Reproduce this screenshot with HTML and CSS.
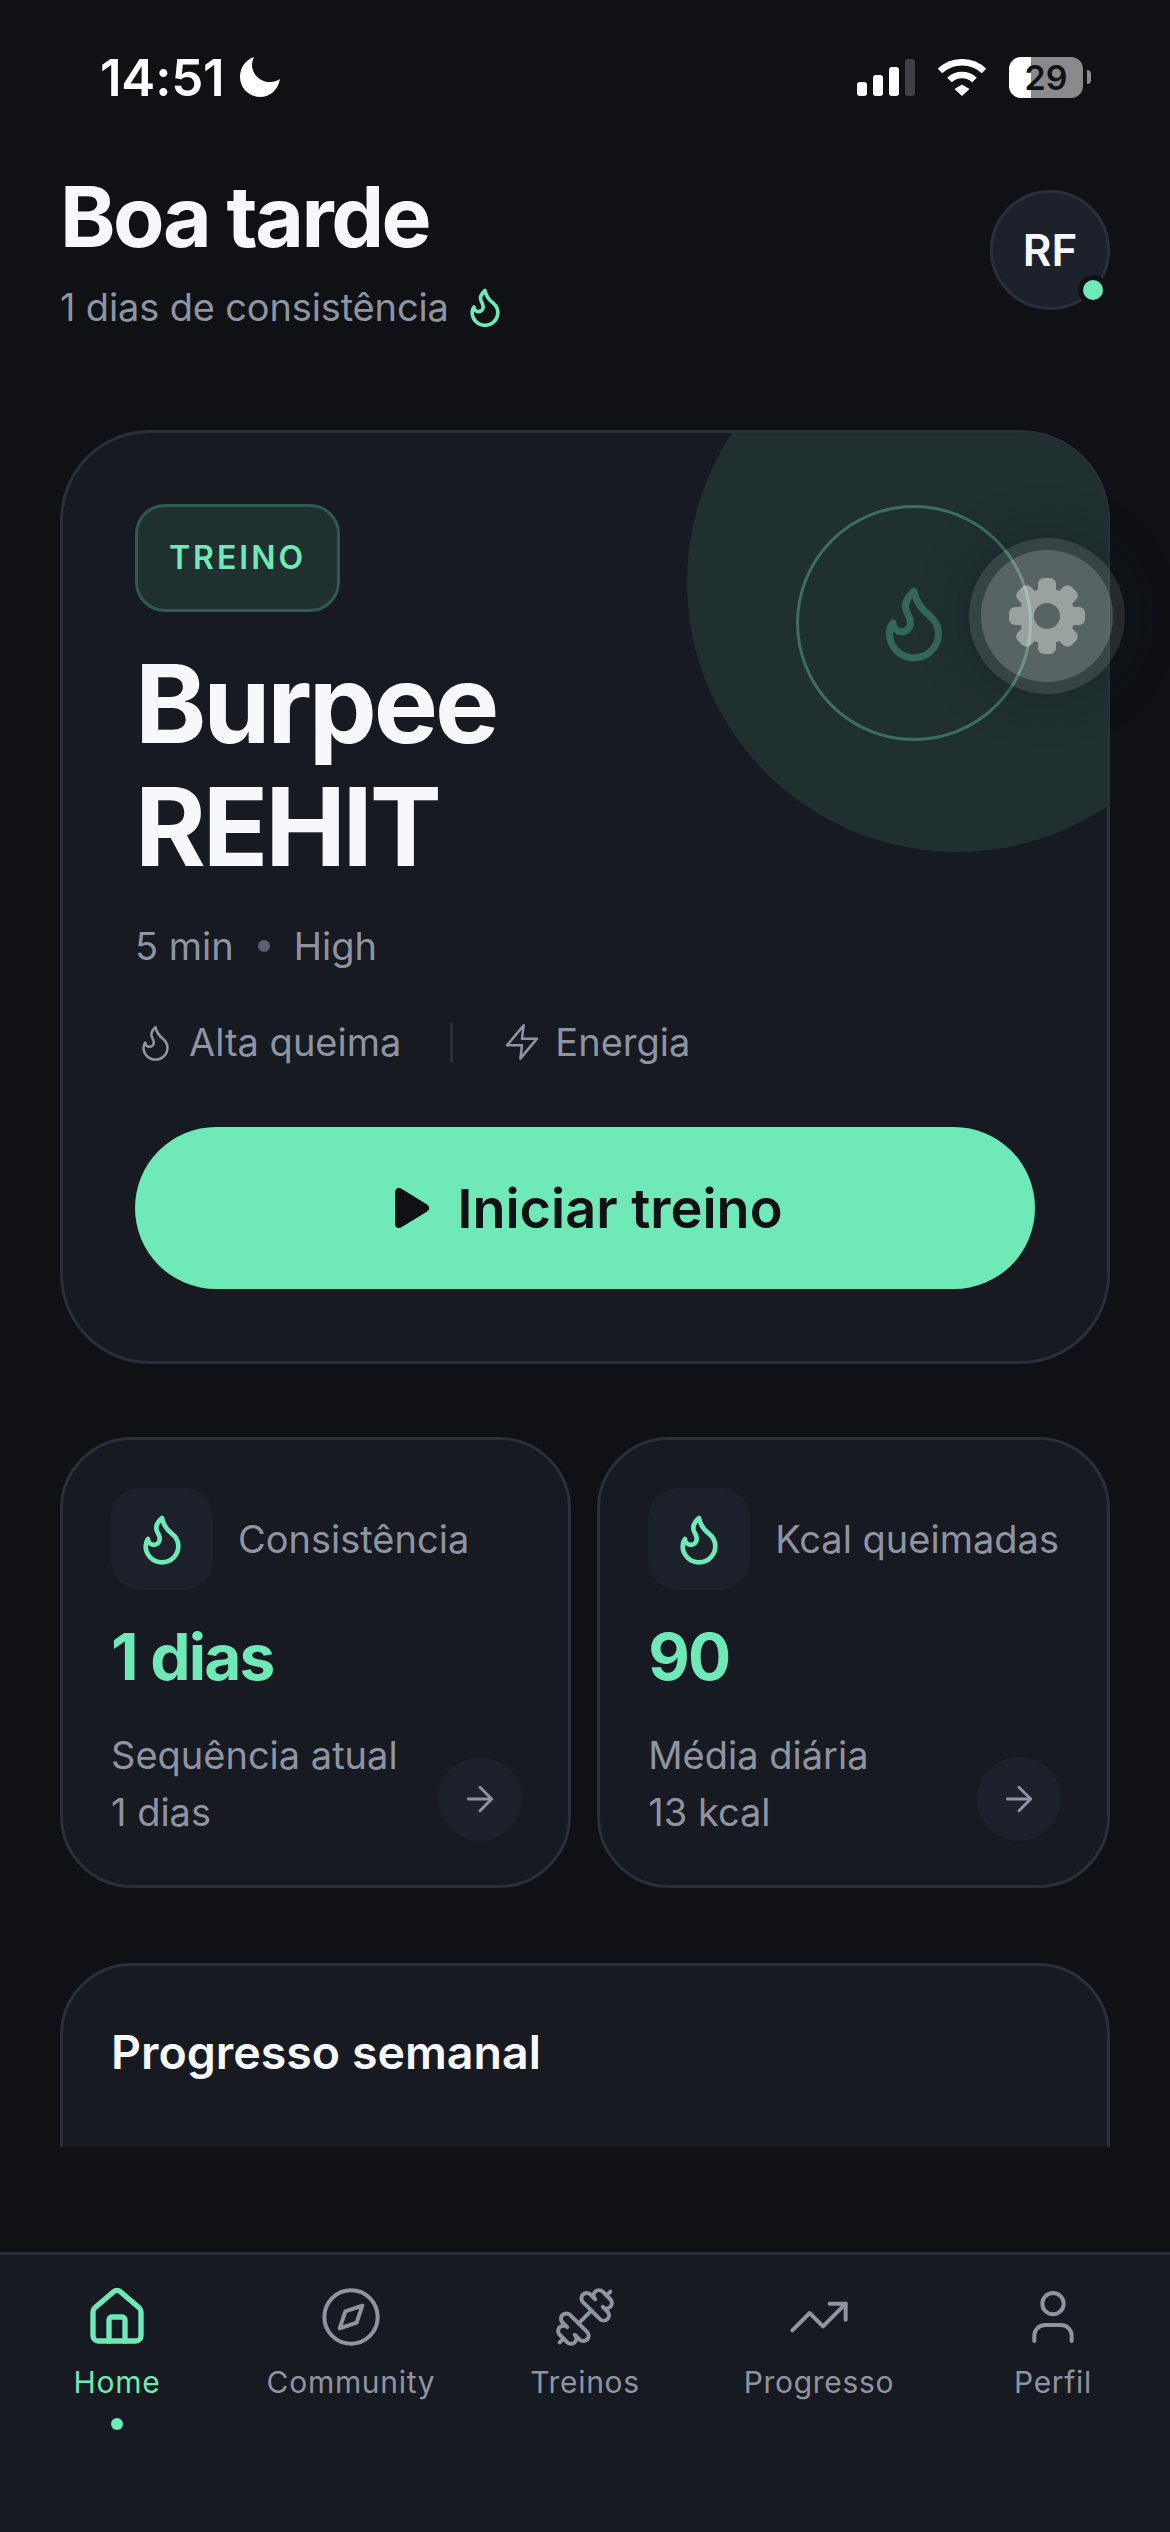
FILE: index.html
```html
<!DOCTYPE html>
<html lang="pt-BR">
<head>
    <meta charset="utf-8">
    <title>Boa tarde</title>
    <link rel="stylesheet" href="styles.css">
</head>
<body>
    <svg class="icon-defs" width="0" height="0">
        <defs>
            <symbol id="flame" viewBox="0 0 24 24">
                <path d="M8.5 14.5A2.5 2.5 0 0 0 11 12c0-1.38-.5-2-1-3-1.072-2.143-.224-4.054 2-6 .5 2.5 2 4.9 4 6.5 2 1.6 3 3.5 3 5.5a7 7 0 1 1-14 0c0-1.153.433-2.294 1-3a2.5 2.5 0 0 0 2.5 2.5z"/>
            </symbol>
            <symbol id="arrow" viewBox="0 0 24 24">
                <path d="M5 12h14"/>
                <path d="m12 5 7 7-7 7"/>
            </symbol>
        </defs>
    </svg>

    <div class="app">
        <div class="scroll-area">
            <div class="status-bar">
                <div class="status-left">
                    <span class="status-time">14:51</span>
                    <svg class="status-moon" width="40" height="40" viewBox="0 0 40 40">
                        <path d="M14 0C5 3 0 11 0 20c0 11 9 20 20 20 10 0 18-7 20-18-3 2-6 3-10 3-10 0-18-8-18-17 0-3 1-6 2-8z"/>
                    </svg>
                </div>
                <div class="status-right">
                    <div class="signal">
                        <span class="signal-bar bar-1"></span>
                        <span class="signal-bar bar-2"></span>
                        <span class="signal-bar bar-3"></span>
                        <span class="signal-bar bar-4"></span>
                    </div>
                    <svg class="wifi" width="50" height="37" viewBox="0 0 50 37">
                        <path class="wifi-arc" d="M3 12A32 32 0 0 1 47 12"/>
                        <path class="wifi-arc" d="M12.5 21A18 18 0 0 1 37.5 21"/>
                        <polygon class="wifi-dot" points="17.5,30 25,25.5 32.5,30 25,37"/>
                    </svg>
                    <div class="battery">
                        <div class="battery-body">29</div>
                        <span class="battery-nub"></span>
                    </div>
                </div>
            </div>

            <header class="header">
                <div>
                    <h1 class="greeting">Boa tarde</h1>
                    <div class="streak">
                        <span>1 dias de consistência</span>
                        <svg class="icon icon-green streak-flame"><use href="#flame"/></svg>
                    </div>
                </div>
                <div class="avatar">
                    RF
                    <span class="avatar-dot"></span>
                </div>
            </header>

            <section class="hero-card">
                <div class="hero-glow"></div>
                <div class="hero-ring">
                    <svg class="icon hero-flame"><use href="#flame"/></svg>
                </div>

                <span class="badge">TREINO</span>
                <h2 class="hero-title">Burpee<br>REHIT</h2>
                <div class="hero-meta">
                    <span>5 min</span>
                    <span class="meta-dot"></span>
                    <span>High</span>
                </div>
                <div class="hero-tags">
                    <div class="tag">
                        <svg class="icon tag-flame"><use href="#flame"/></svg>
                        <span>Alta queima</span>
                    </div>
                    <span class="tag-divider"></span>
                    <div class="tag">
                        <svg class="icon tag-zap" viewBox="0 0 24 24"><polygon points="13 2 3 14 12 14 11 22 21 10 12 10 13 2"/></svg>
                        <span>Energia</span>
                    </div>
                </div>
                <button class="start-button">
                    <svg class="play" width="40" height="42" viewBox="0 0 40 42"><polygon points="6,5 6,37 32,21"/></svg>
                    Iniciar treino
                </button>
            </section>

            <div class="stats">
                <section class="stat-card">
                    <div class="stat-head">
                        <div class="stat-icon"><svg class="icon icon-green stat-flame"><use href="#flame"/></svg></div>
                        <span>Consistência</span>
                    </div>
                    <div class="stat-value">1 dias</div>
                    <div class="stat-foot">
                        <div>Sequência atual<br>1 dias</div>
                        <div class="stat-arrow"><svg class="icon arrow-icon"><use href="#arrow"/></svg></div>
                    </div>
                </section>
                <section class="stat-card">
                    <div class="stat-head">
                        <div class="stat-icon"><svg class="icon icon-green stat-flame"><use href="#flame"/></svg></div>
                        <span>Kcal queimadas</span>
                    </div>
                    <div class="stat-value">90</div>
                    <div class="stat-foot">
                        <div>Média diária<br>13 kcal</div>
                        <div class="stat-arrow"><svg class="icon arrow-icon"><use href="#arrow"/></svg></div>
                    </div>
                </section>
            </div>

            <section class="progress-card">
                <h3 class="progress-title">Progresso semanal</h3>
            </section>
        </div>

        <nav class="tab-bar">
            <div class="tab tab-active">
                <svg class="icon tab-icon" viewBox="0 0 24 24">
                    <path d="M3 10a2 2 0 0 1 .7-1.5l7-6a2 2 0 0 1 2.6 0l7 6A2 2 0 0 1 21 10v9a2 2 0 0 1-2 2H5a2 2 0 0 1-2-2z"/>
                    <path d="M15 21v-8a1 1 0 0 0-1-1h-4a1 1 0 0 0-1 1v8"/>
                </svg>
                <span>Home</span>
                <span class="tab-dot"></span>
            </div>
            <div class="tab">
                <svg class="icon tab-icon" viewBox="0 0 24 24">
                    <circle cx="12" cy="12" r="10"/>
                    <polygon points="16.24 7.76 14.12 14.12 7.76 16.24 9.88 9.88 16.24 7.76"/>
                </svg>
                <span>Community</span>
            </div>
            <div class="tab">
                <svg class="icon tab-icon dumbbell" viewBox="0 0 24 24">
                    <path d="M14.4 14.4 9.6 9.6"/>
                    <path d="M18.657 21.485a2 2 0 1 1-2.829-2.828l-1.767 1.768a2 2 0 1 1-2.829-2.829l6.364-6.364a2 2 0 1 1 2.829 2.829l-1.768 1.767a2 2 0 1 1 2.828 2.829z"/>
                    <path d="m21.5 21.5-1.4-1.4"/>
                    <path d="M3.9 3.9 2.5 2.5"/>
                    <path d="M6.404 12.768a2 2 0 1 1-2.829-2.829l1.768-1.767a2 2 0 1 1-2.828-2.829l2.828-2.828a2 2 0 1 1 2.829 2.828l1.767-1.768a2 2 0 1 1 2.829 2.829z"/>
                </svg>
                <span>Treinos</span>
            </div>
            <div class="tab">
                <svg class="icon tab-icon" viewBox="0 0 24 24">
                    <polyline points="22 7 13.5 15.5 8.5 10.5 2 17"/>
                    <polyline points="16 7 22 7 22 13"/>
                </svg>
                <span>Progresso</span>
            </div>
            <div class="tab">
                <svg class="icon tab-icon" viewBox="0 0 24 24">
                    <path d="M19 21v-2a4 4 0 0 0-4-4H9a4 4 0 0 0-4 4v2"/>
                    <circle cx="12" cy="7" r="4"/>
                </svg>
                <span>Perfil</span>
            </div>
        </nav>

        <!-- floating assistive touch button -->
        <div class="touch-button">
            <div class="touch-inner">
                <svg class="gear" width="80" height="80" viewBox="0 0 80 80">
                    <mask id="gearHole">
                        <rect width="80" height="80" fill="#fff"/>
                        <circle cx="40" cy="40" r="13" fill="#000"/>
                    </mask>
                    <g mask="url(#gearHole)">
                        <circle cx="40" cy="40" r="28"/>
                        <rect x="31" y="2" width="18" height="76" rx="6"/>
                        <rect x="31" y="2" width="18" height="76" rx="6" transform="rotate(45 40 40)"/>
                        <rect x="31" y="2" width="18" height="76" rx="6" transform="rotate(90 40 40)"/>
                        <rect x="31" y="2" width="18" height="76" rx="6" transform="rotate(135 40 40)"/>
                    </g>
                </svg>
            </div>
        </div>
    </div>
</body>
</html>
```

FILE: styles.css
```css
* {
    margin: 0;
    padding: 0;
    box-sizing: border-box;
}

body {
    background-color: #0f1115;
    color: #f7f8fc;
    font-family: 'Inter', 'Liberation Sans', sans-serif;
}

.icon-defs {
    position: absolute;
}

.icon {
    fill: none;
    stroke: currentColor;
    stroke-width: 2;
    stroke-linecap: round;
    stroke-linejoin: round;
}

.icon-green {
    color: #6ee9b7;
}

.app {
    position: relative;
    width: 1170px;
    height: 2532px;
    display: flex;
    flex-direction: column;
    overflow: hidden;
}

.scroll-area {
    height: 2147px;
    padding: 0 60px;
    overflow: hidden;
}

/* Status bar */
.status-bar {
    height: 169px;
    margin: 0 -60px;
    padding: 50px 79px 0 100px;
    display: flex;
    justify-content: space-between;
    align-items: flex-start;
}

.status-left {
    display: flex;
    align-items: center;
    gap: 16px;
    height: 54px;
}

.status-time {
    font-size: 51px;
    font-weight: 600;
    letter-spacing: -0.2px;
    color: #fff;
}

.status-moon {
    fill: #fff;
}

.status-right {
    display: flex;
    align-items: center;
    height: 54px;
}

.signal {
    display: flex;
    align-items: flex-end;
    gap: 6px;
    height: 37px;
}

.signal-bar {
    width: 10px;
    border-radius: 3px;
    background-color: #fff;
}

.bar-1 { height: 14px; }
.bar-2 { height: 21px; }
.bar-3 { height: 29px; }
.bar-4 { height: 37px; background-color: #3f4044; }

.wifi {
    margin: 0 22px;
}

.wifi-arc {
    fill: none;
    stroke: #fff;
    stroke-width: 6.5;
}

.wifi-dot {
    fill: #fff;
}

.battery {
    display: flex;
    align-items: center;
    gap: 4px;
}

.battery-body {
    width: 74px;
    height: 41px;
    border-radius: 12px;
    background: linear-gradient(to right, #fff 30%, #8a8a8c 30%);
    color: #111215;
    font-size: 34px;
    font-weight: 600;
    line-height: 41px;
    text-align: center;
}

.battery-nub {
    width: 4px;
    height: 14px;
    border-radius: 0 4px 4px 0;
    background-color: #8a8a8c;
}

/* Header */
.header {
    display: flex;
    justify-content: space-between;
    align-items: center;
}

.greeting {
    font-size: 84px;
    font-weight: 700;
    line-height: 96px;
    letter-spacing: -2.5px;
}

.streak {
    display: flex;
    align-items: center;
    gap: 14px;
    margin-top: 19px;
    font-size: 38px;
    line-height: 46px;
    letter-spacing: -0.15px;
    color: #8f94a3;
}

.streak-flame {
    width: 44px;
    height: 44px;
}

.avatar {
    position: relative;
    width: 120px;
    height: 120px;
    display: flex;
    justify-content: center;
    align-items: center;
    border: 3px solid #2a2f3c;
    border-radius: 50%;
    background-color: #1d212b;
    font-size: 44px;
    font-weight: 600;
}

.avatar-dot {
    position: absolute;
    right: -1px;
    bottom: 2px;
    width: 30px;
    height: 30px;
    border: 5px solid #0f1115;
    border-radius: 50%;
    background-color: #6ee9b7;
}

/* Main workout card */
.hero-card {
    position: relative;
    margin-top: 100px;
    height: 934px;
    padding: 71px 72px 0;
    border: 3px solid #2a2f3c;
    border-radius: 90px;
    background-color: #171a21;
    overflow: hidden;
}

.hero-glow {
    position: absolute;
    left: 624px;
    top: -121px;
    width: 540px;
    height: 540px;
    border-radius: 50%;
    background-color: #20302f;
}

.hero-ring {
    position: absolute;
    left: 733px;
    top: 72px;
    width: 236px;
    height: 236px;
    display: flex;
    justify-content: center;
    align-items: center;
    border: 3px solid #3d6f60;
    border-radius: 50%;
}

.hero-flame {
    width: 84px;
    height: 84px;
    color: #35665a;
}

.badge {
    display: block;
    width: 205px;
    height: 108px;
    border: 3px solid #2f5a4d;
    border-radius: 30px;
    background-color: #20302f;
    color: #6ee9b7;
    font-size: 32px;
    font-weight: 600;
    line-height: 102px;
    letter-spacing: 3px;
    text-align: center;
}

.hero-title {
    margin-top: 30px;
    font-size: 108px;
    font-weight: 700;
    line-height: 123px;
    letter-spacing: -3.2px;
}

.hero-meta {
    display: flex;
    align-items: center;
    gap: 24px;
    margin-top: 35px;
    font-size: 38px;
    line-height: 46px;
    color: #8f94a3;
}

.meta-dot {
    width: 12px;
    height: 12px;
    border-radius: 50%;
    background-color: #5c6070;
}

.hero-tags {
    display: flex;
    align-items: center;
    margin-top: 50px;
    font-size: 38px;
    line-height: 46px;
    color: #8f94a3;
}

.tag {
    display: flex;
    align-items: center;
    gap: 13px;
}

.tag-flame {
    width: 41px;
    height: 41px;
    stroke-width: 1.5;
}

.tag-zap {
    width: 40px;
    height: 40px;
    stroke-width: 1.5;
}

.tag-divider {
    width: 3px;
    height: 39px;
    margin: 0 49px;
    background-color: #2a2f3c;
}

.start-button {
    width: 900px;
    height: 162px;
    margin-top: 62px;
    padding-left: 6px;
    display: flex;
    justify-content: center;
    align-items: center;
    gap: 24px;
    border: none;
    border-radius: 81px;
    background-color: #6ee9b7;
    color: #0f1115;
    font-family: inherit;
    font-size: 54px;
    font-weight: 600;
}

.play {
    fill: #0f1115;
    stroke: #0f1115;
    stroke-width: 8;
    stroke-linejoin: round;
}

/* Stat cards */
.stats {
    display: grid;
    grid-template-columns: 1fr 1fr;
    gap: 26px;
    margin-top: 73px;
}

.stat-card {
    height: 451px;
    padding: 48px 48px 0;
    border: 3px solid #2a2f3c;
    border-radius: 72px;
    background-color: #171a21;
}

.stat-head {
    display: flex;
    align-items: center;
    gap: 25px;
    font-size: 38px;
    white-space: nowrap;
    color: #8f94a3;
}

.stat-icon {
    width: 102px;
    height: 102px;
    display: flex;
    justify-content: center;
    align-items: center;
    border-radius: 30px;
    background-color: #1d212b;
}

.stat-flame {
    width: 56px;
    height: 56px;
}

.stat-value {
    margin-top: 29px;
    font-size: 64px;
    font-weight: 700;
    line-height: 76px;
    letter-spacing: -1.8px;
    color: #6ee9b7;
}

.stat-foot {
    display: flex;
    justify-content: space-between;
    align-items: flex-end;
    margin-top: 32px;
    font-size: 38px;
    line-height: 57px;
    color: #8f94a3;
}

.stat-arrow {
    width: 84px;
    height: 84px;
    margin-right: -2px;
    display: flex;
    justify-content: center;
    align-items: center;
    border-radius: 50%;
    background-color: #1d212b;
}

.arrow-icon {
    width: 40px;
    height: 40px;
    stroke-width: 1.7;
}

/* Weekly progress */
.progress-card {
    height: 420px;
    margin-top: 75px;
    padding: 58px 48px 0;
    border: 3px solid #2a2f3c;
    border-radius: 72px;
    background-color: #171a21;
}

.progress-title {
    font-size: 46.5px;
    font-weight: 600;
    line-height: 56px;
}

/* Tab bar */
.tab-bar {
    height: 280px;
    margin-top: auto;
    padding-top: 30px;
    display: grid;
    grid-template-columns: repeat(5, 1fr);
    border-top: 3px solid #2a2f3c;
    background-color: #171a21;
}

.tab {
    display: flex;
    flex-direction: column;
    align-items: center;
    color: #8f94a3;
    font-size: 30px;
    line-height: 36px;
    letter-spacing: 0.7px;
}

.tab-active {
    color: #6ee9b7;
}

.tab-icon {
    width: 64px;
    height: 64px;
    margin-bottom: 15px;
    stroke-width: 1.5;
}

.tab-active .tab-icon {
    stroke-width: 2;
}

.dumbbell {
    transform: scaleX(-1);
}

.tab-dot {
    width: 12px;
    height: 12px;
    margin-top: 18px;
    border-radius: 50%;
    background-color: #6ee9b7;
}

/* Assistive touch */
.touch-button {
    position: absolute;
    left: 969px;
    top: 538px;
    width: 156px;
    height: 156px;
    display: flex;
    justify-content: center;
    align-items: center;
    border-radius: 50%;
    background-color: rgba(255, 255, 255, 0.1);
    box-shadow: 0 0 50px rgba(16, 24, 34, 0.4);
}

.touch-inner {
    width: 132px;
    height: 132px;
    display: flex;
    justify-content: center;
    align-items: center;
    border-radius: 50%;
    background-color: rgba(255, 255, 255, 0.17);
}

.gear {
    fill: #fff;
    opacity: 0.4;
}
```
